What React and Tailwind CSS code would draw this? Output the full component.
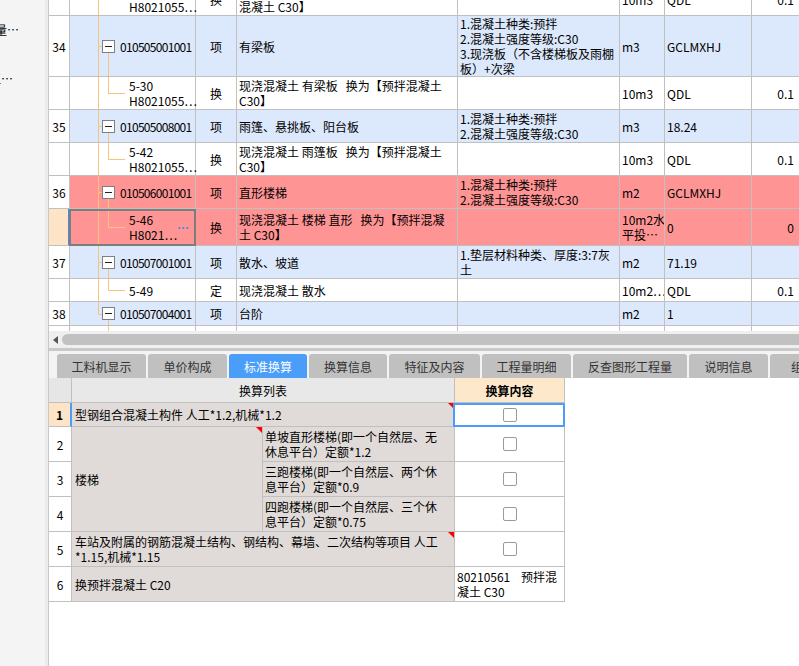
import React from "react";

const B = "border-[#c0c0c0]";
const BLUE = "bg-[#dce8fb]";
const RED = "bg-[#ff9494]";
const OR = "bg-[#f7c47c]";

function Lines({ lines }) {
  return (
    <div className="whitespace-pre">
      {lines.map((l, i) => (
        <div key={i}>{l}</div>
      ))}
    </div>
  );
}

function Tree({ t }) {
  const { kind, lines, selected } = t;
  const item = kind === "item" || kind === "itemLast";
  return (
    <div className={`relative shrink-0 w-[126px] h-full border-r ${B} flex items-center`}>
      {kind === "item" || kind === "sub" ? (
        <div className={`absolute left-[28px] top-0 bottom-0 w-px ${OR}`} />
      ) : null}
      {kind === "itemLast" ? <div className={`absolute left-[28px] top-0 h-1/2 w-px ${OR}`} /> : null}
      {item ? (
        <>
          <div className={`absolute left-[28px] top-1/2 w-[4px] h-px ${OR}`} />
          <div className={`absolute left-[38px] top-1/2 bottom-0 w-px ${OR}`} />
        </>
      ) : null}
      {kind === "sub" ? (
        <>
          <div className={`absolute left-[38px] top-0 h-1/2 w-px ${OR}`} />
          <div className={`absolute left-[38px] top-1/2 w-[17px] h-px ${OR}`} />
        </>
      ) : null}
      {kind === "subTail" ? <div className={`absolute left-[38px] top-0 bottom-0 w-px ${OR}`} /> : null}
      {item ? (
        <div className="relative flex items-center pl-[32px]">
          <div className="w-[13px] h-[13px] border border-[#808080] bg-white flex items-center justify-center">
            <div className="w-[7px] h-px bg-[#222]" />
          </div>
          <div className="ml-[5px] whitespace-nowrap tracking-[-0.7px]">{lines[0]}</div>
        </div>
      ) : (
        <div className="relative pl-[59px] flex items-center w-full">
          <Lines lines={lines} />
          {selected ? <span className="ml-auto mr-[8px] text-[#3a8ee6] font-bold">…</span> : null}
        </div>
      )}
      {selected ? (
        <div className="absolute top-0 -left-px -right-px -bottom-px border-2 border-[#7d7d7d]" />
      ) : null}
    </div>
  );
}

function Row({ r }) {
  return (
    <div className={`flex shrink-0 border-b ${B} ${r.h} ${r.bg}`}>
      <div
        className={`shrink-0 w-[21px] h-full flex items-center justify-center ${
          r.sel ? "bg-[#fde4c6] border-r-2 border-[#3b8df0]" : `bg-white border-r ${B}`
        }`}
      >
        {r.num}
      </div>
      <Tree t={r.tree} />
      <div className={`shrink-0 w-[41px] h-full border-r ${B} flex items-center justify-center`}>{r.type}</div>
      <div className={`shrink-0 w-[221px] h-full border-r ${B} flex items-center pl-[2px] overflow-hidden`}>
        <Lines lines={r.name} />
      </div>
      <div className={`shrink-0 w-[162px] h-full border-r ${B} flex items-center pl-[2px] overflow-hidden`}>
        <Lines lines={r.feat} />
      </div>
      <div className={`shrink-0 w-[45px] h-full border-r ${B} flex items-center pl-[2px] overflow-hidden`}>
        <Lines lines={r.unit} />
      </div>
      <div className={`shrink-0 w-[87px] h-full border-r ${B} flex items-center pl-[2px] overflow-hidden`}>
        <Lines lines={r.expr} />
      </div>
      <div className={`shrink-0 w-[60px] h-full flex items-center justify-end pr-[18px]`}>{r.last}</div>
    </div>
  );
}

const rows = [
  {
    h: "h-[33px]", bg: "bg-white", num: "",
    tree: { kind: "sub", lines: ["5-23", "H8021055…"] },
    type: "换", name: ["现浇混凝土 过梁  换为【预拌", "混凝土 C30】"], feat: [], unit: ["10m3"], expr: ["QDL"], last: "0.1",
  },
  {
    h: "h-[61px]", bg: BLUE, num: "34",
    tree: { kind: "item", lines: ["010505001001"] },
    type: "项", name: ["有梁板"],
    feat: ["1.混凝土种类:预拌", "2.混凝土强度等级:C30", "3.现浇板（不含楼梯板及雨棚", "板）+次梁"],
    unit: ["m3"], expr: ["GCLMXHJ"], last: "",
  },
  {
    h: "h-[33px]", bg: "bg-white", num: "",
    tree: { kind: "sub", lines: ["5-30", "H8021055…"] },
    type: "换", name: ["现浇混凝土 有梁板   换为【预拌混凝土", "C30】"], feat: [], unit: ["10m3"], expr: ["QDL"], last: "0.1",
  },
  {
    h: "h-[33px]", bg: BLUE, num: "35",
    tree: { kind: "item", lines: ["010505008001"] },
    type: "项", name: ["雨篷、悬挑板、阳台板"],
    feat: ["1.混凝土种类:预拌", "2.混凝土强度等级:C30"],
    unit: ["m3"], expr: ["18.24"], last: "",
  },
  {
    h: "h-[33px]", bg: "bg-white", num: "",
    tree: { kind: "sub", lines: ["5-42", "H8021055…"] },
    type: "换", name: ["现浇混凝土 雨篷板   换为【预拌混凝土", "C30】"], feat: [], unit: ["10m3"], expr: ["QDL"], last: "0.1",
  },
  {
    h: "h-[33px]", bg: RED, num: "36",
    tree: { kind: "item", lines: ["010506001001"] },
    type: "项", name: ["直形楼梯"],
    feat: ["1.混凝土种类:预拌", "2.混凝土强度等级:C30"],
    unit: ["m2"], expr: ["GCLMXHJ"], last: "",
  },
  {
    h: "h-[37px]", bg: RED, num: "", sel: true,
    tree: { kind: "sub", lines: ["5-46", "H8021…"], selected: true },
    type: "换", name: ["现浇混凝土 楼梯 直形   换为【预拌混凝", "土 C30】"], feat: [], unit: ["10m2水", "平投…"], expr: ["0"], last: "0",
  },
  {
    h: "h-[33px]", bg: BLUE, num: "37",
    tree: { kind: "item", lines: ["010507001001"] },
    type: "项", name: ["散水、坡道"],
    feat: ["1.垫层材料种类、厚度:3:7灰", "土"],
    unit: ["m2"], expr: ["71.19"], last: "",
  },
  {
    h: "h-[23px]", bg: "bg-white", num: "",
    tree: { kind: "sub", lines: ["5-49"] },
    type: "定", name: ["现浇混凝土 散水"], feat: [], unit: ["10m2…"], expr: ["QDL"], last: "0.1",
  },
  {
    h: "h-[24px]", bg: BLUE, num: "38",
    tree: { kind: "itemLast", lines: ["010507004001"] },
    type: "项", name: ["台阶"], feat: [], unit: ["m2"], expr: ["1"], last: "",
  },
  {
    h: "h-[24px]", bg: "bg-white", num: "",
    tree: { kind: "subTail", lines: [] },
    type: "定", name: ["现浇混凝土 台阶"], feat: [], unit: ["10m2…"], expr: ["QDL"], last: "0.1",
  },
];

const tabs = [
  { t: "工料机显示", w: "w-[89px]" },
  { t: "单价构成", w: "w-[79px]" },
  { t: "标准换算", w: "w-[78px]", active: true },
  { t: "换算信息", w: "w-[78px]" },
  { t: "特征及内容", w: "w-[91px]" },
  { t: "工程量明细", w: "w-[89px]" },
  { t: "反查图形工程量", w: "w-[114px]" },
  { t: "说明信息", w: "w-[79px]" },
  { t: "组价方案", w: "w-[90px]" },
];

function Tri() {
  return (
    <div className="absolute top-0 right-0 w-0 h-0 border-t-[6px] border-t-[#ff0000] border-l-[6px] border-l-transparent" />
  );
}

function Check() {
  return <div className="w-[14px] h-[14px] border border-[#9a9a9a] rounded-[2px] bg-white" />;
}

const cell = `border-r border-b ${B}`;
const grayCell = `${cell} bg-[#e0dbd8] relative flex items-center`;

function BottomTable() {
  return (
    <div className="grid grid-cols-[23px_191px_192px_110px] grid-rows-[25px_24px_35px_35px_35px_35px_35px] w-max">
      {/* header */}
      <div className={`${cell} bg-[#e6e6e6]`} />
      <div className={`${cell} col-span-2 bg-[#e8e8e8] flex items-center justify-center`}>换算列表</div>
      <div className={`${cell} bg-[#fde8cb] flex items-center justify-center font-bold`}>换算内容</div>

      {/* row 1 */}
      <div className={`border-b ${B} border-r-2 border-r-[#4a9df8] bg-[#fde4c7] flex items-center justify-center font-bold`}>1</div>
      <div className={`${grayCell} col-span-2 pl-[3px] whitespace-pre`}>
        型钢组合混凝土构件 人工*1.2,机械*1.2
        <Tri />
      </div>
      <div className={`${cell} bg-white relative flex items-center justify-center`}>
        <Check />
        <div className="absolute left-[-2px] top-0 right-[-1px] bottom-[-1px] border-2 border-[#4a9df8]" />
      </div>

      {/* row 2 */}
      <div className={`${cell} bg-white flex items-center justify-center`}>2</div>
      <div className={`${grayCell} row-span-3 pl-[3px]`}>
        楼梯
        <Tri />
      </div>
      <div className={`${grayCell} pl-[2px]`}>
        <Lines lines={["单坡直形楼梯(即一个自然层、无", "休息平台）定额*1.2"]} />
      </div>
      <div className={`${cell} bg-white flex items-center justify-center`}>
        <Check />
      </div>

      {/* row 3 */}
      <div className={`${cell} bg-white flex items-center justify-center`}>3</div>
      <div className={`${grayCell} pl-[2px]`}>
        <Lines lines={["三跑楼梯(即一个自然层、两个休", "息平台）定额*0.9"]} />
      </div>
      <div className={`${cell} bg-white flex items-center justify-center`}>
        <Check />
      </div>

      {/* row 4 */}
      <div className={`${cell} bg-white flex items-center justify-center`}>4</div>
      <div className={`${grayCell} pl-[2px]`}>
        <Lines lines={["四跑楼梯(即一个自然层、三个休", "息平台）定额*0.75"]} />
      </div>
      <div className={`${cell} bg-white flex items-center justify-center`}>
        <Check />
      </div>

      {/* row 5 */}
      <div className={`${cell} bg-white flex items-center justify-center`}>5</div>
      <div className={`${grayCell} col-span-2 pl-[3px]`}>
        <Lines lines={["车站及附属的钢筋混凝土结构、钢结构、幕墙、二次结构等项目 人工", "*1.15,机械*1.15"]} />
        <Tri />
      </div>
      <div className={`${cell} bg-white flex items-center justify-center`}>
        <Check />
      </div>

      {/* row 6 */}
      <div className={`${cell} bg-white flex items-center justify-center`}>6</div>
      <div className={`${grayCell} col-span-2 pl-[3px] whitespace-pre`}>换预拌混凝土 C20</div>
      <div className={`${cell} bg-white flex items-center pl-[2px]`}>
        <Lines lines={["80210561    预拌混", "凝土 C30"]} />
      </div>
    </div>
  );
}

export default function App() {
  return (
    <div className="w-[799px] h-[666px] overflow-hidden flex bg-white text-black text-[12px] leading-[15px] font-['Noto_Sans_CJK_SC','Liberation_Sans',sans-serif]">
      {/* left panel */}
      <div className="w-[49px] h-full shrink-0 flex bg-[#f4f4f4] border-r border-[#c8c8c8]">
        <div className="flex-1 overflow-hidden flex flex-col pt-[22px]">
          <div className="whitespace-nowrap ml-[-5px]">量…</div>
          <div className="whitespace-nowrap ml-[-11px] mt-[34px]">工…</div>
        </div>
        <div className="w-[3px] h-full bg-[#ebebeb]" />
      </div>

      {/* main */}
      <div className="flex-1 min-w-0 h-full flex flex-col">
        <div className="h-[331px] shrink-0 overflow-hidden">
          <div className="mt-[-17px] flex flex-col">
            {rows.map((r, i) => (
              <Row key={i} r={r} />
            ))}
          </div>
        </div>

        {/* scrollbar */}
        <div className="h-[17px] shrink-0 bg-[#efefef] flex items-center">
          <div className="w-[13px] flex justify-center">
            <div className="w-0 h-0 border-y-[4px] border-y-transparent border-r-[5px] border-r-[#555]" />
          </div>
          <div className="flex-1 h-[11px] rounded-l-full bg-[#c1c1c1]" />
        </div>
        <div className="h-[3px] shrink-0 bg-[#c9c9c9]" />

        {/* tabs */}
        <div className="h-[27px] shrink-0 bg-[#f3f3f3] flex items-end pl-[8px] gap-[2px] overflow-hidden">
          {tabs.map((t, i) => (
            <div
              key={i}
              className={`${t.w} h-[24px] shrink-0 rounded-t-[3px] flex items-center justify-center whitespace-nowrap ${
                t.active ? "bg-[#4a9df8] text-white" : "bg-[#c0c0c0] text-[#333]"
              }`}
            >
              {t.t}
            </div>
          ))}
        </div>

        <div className="flex-1 bg-white">
          <BottomTable />
        </div>
      </div>
    </div>
  );
}
